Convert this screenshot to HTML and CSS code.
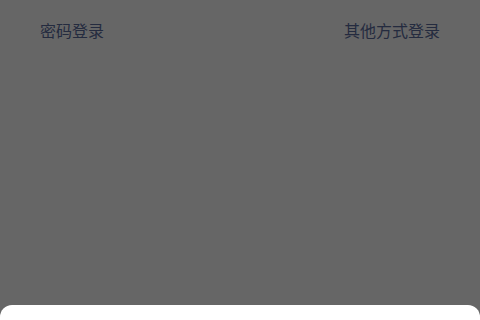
FILE: index.html
```html
<!DOCTYPE html>
<html lang="zh-CN">
<head>
  <meta charset="UTF-8" />
  <title>登录</title>
  <link rel="stylesheet" href="styles.css">
</head>
<body>

  <div class="page">
    <!-- 顶部切换 -->
    <div class="top-bar">
      <span class="top-link">密码登录</span>
      <span class="top-link">其他方式登录</span>
    </div>
  </div>

  <!-- 遮罩 + 底部弹层 -->
  <div class="mask"></div>
  <div class="sheet"></div>

</body>
</html>
```

FILE: styles.css
```css
html, body {
  margin: 0;
  padding: 0;
  height: 100%;
}

body {
  font-family: "Noto Sans CJK SC", "Noto Sans", sans-serif;
  background: #fff;
  overflow: hidden;
}

.page {
  height: 100%;
}

.top-bar {
  display: flex;
  justify-content: space-between;
  align-items: center;
  height: 60px;
  padding: 0 40px;
}

.top-link {
  font-size: 16px;
  color: #5a6c9e;
  line-height: 1;
}

/* 遮罩 */
.mask {
  position: fixed;
  inset: 0;
  background: rgba(0, 0, 0, 0.6);
}

.sheet {
  position: fixed;
  left: 0;
  right: 0;
  bottom: 0;
  height: 15px;
  background: #fff;
  border-radius: 12px 12px 0 0;
}
```
